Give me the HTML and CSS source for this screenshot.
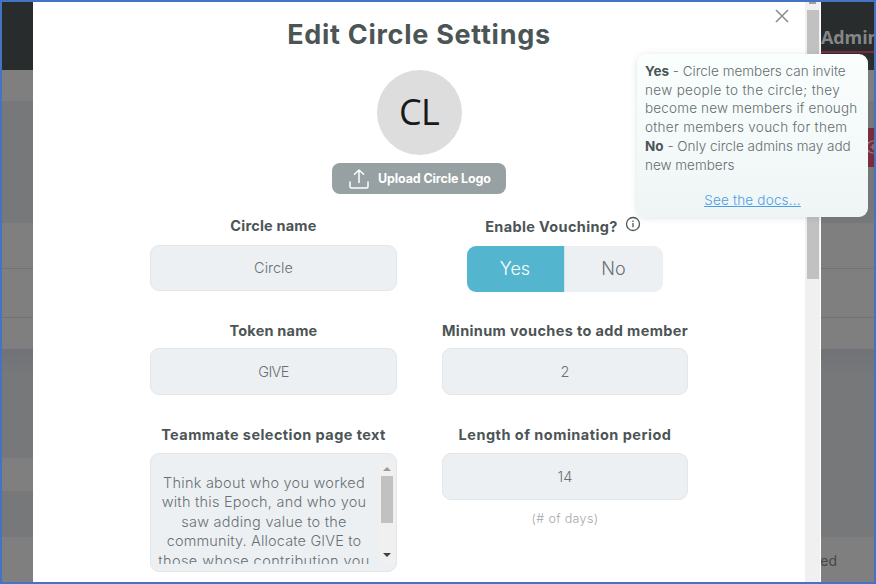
FILE: index.html
```
<!DOCTYPE html>
<html lang="en">
<head>
<meta charset="utf-8">
<title>Edit Circle Settings</title>
<link rel="stylesheet" href="styles.css">
</head>
<body>
<div class="frame">
  <div class="page">
    <header class="topbar"><span class="nav-item">Admin</span></header>
    <div class="band-light subnav"></div>
    <div class="band-mid hero">
      <div class="hero-button"><svg width="14" height="14" viewBox="0 0 14 14" fill="none" stroke="#8c8587" stroke-width="1.2"><circle cx="7" cy="7" r="6"/><path d="M7 4v6M4 7h6"/></svg></div>
    </div>
    <div class="table"><div class="row row-a"></div><div class="row row-b"></div><div class="row row-c"></div></div>
    <div class="band-mid shade"></div>
    <div class="section-tab"></div>
    <div class="band-mid gap"></div>
    <footer class="band-light foot"><span>ed</span></footer>
  </div>

  <div class="modal">
    <main class="content">
      <h1><span class="t-title">Edit Circle Settings</span></h1>
      <div class="avatar"><span class="t-avatar">CL</span></div>
      <button class="upload">
        <svg width="20" height="20" viewBox="0 0 20 20" fill="none" stroke="#fff" stroke-width="1.5" stroke-linecap="round" stroke-linejoin="round"><path d="M1 13v4.500a1.500 1.500 0 0 0 1.500 1.500h15a1.500 1.500 0 0 0 1.500-1.500V13M10 13.500V1.200M5.500 5.200 10 1l4.500 4.200"/></svg>
        <span class="t-upload">Upload Circle Logo</span>
      </button>
      <div class="form">
        <div class="col">
          <div class="field first"><label class="t-circle">Circle name</label><div class="input"><span class="v-circle">Circle</span></div></div>
          <div class="field"><label class="t-token">Token name</label><div class="input"><span class="v-give">GIVE</span></div></div>
          <div class="field last"><label class="t-team">Teammate selection page text</label>
            <div class="input area">
              <div class="area-text"><span class="a1">Think about who you worked</span><span class="a2">with this Epoch, and who you</span><span class="a3">saw adding value to the</span><span class="a4">community. Allocate GIVE to</span><span class="a5">those whose contribution you</span></div>
              <div class="area-bar"><i class="up"></i><i class="thumb"></i><i class="down"></i></div>
            </div>
          </div>
        </div>
        <div class="col right">
          <div class="field first"><label class="vouch"><span class="t-vouch">Enable Vouching?</span><svg width="16" height="16" viewBox="0 0 16 16" fill="none" stroke="#4c5556" stroke-width="1.300"><circle cx="8" cy="8" r="6.500"/><path d="M8 7v4.200M8 4.400v1.500"/></svg></label>
            <div class="toggle"><div class="on"><span class="t-yes">Yes</span></div><div class="off"><span class="t-no">No</span></div></div></div>
          <div class="field"><label class="t-min">Mininum vouches to add member</label><div class="input"><span>2</span></div></div>
          <div class="field last"><label class="t-length">Length of nomination period</label><div class="input"><span>14</span></div><div class="hint"><span class="t-days">(# of days)</span></div></div>
        </div>
      </div>
    </main>
    <div class="scroll"><i class="scroll-up"></i><i class="scroll-thumb"></i></div>
    <svg class="close" width="16" height="16" viewBox="0 0 16 16" stroke="#8a9395" stroke-width="1.700"><path d="M2 2l12 12M14 2 2 14"/></svg>
  </div>

  <aside class="tooltip">
    <p><span class="p1"><b>Yes</b> - Circle members can invite</span><span class="p2">new people to the circle; they</span><span class="p3">become new members if enough</span><span class="p4">other members vouch for them</span><span class="p5"><b>No</b> - Only circle admins may add</span><span class="p6">new members</span></p>
    <a class="t-docs">See the docs...</a>
  </aside>
</div>
</body>
</html>
```
FILE: styles.css
```
* { box-sizing: border-box; }
body { margin: 0; font-family: Inter, "Liberation Sans", sans-serif; color: #4c5556; }
.frame { position: relative; width: 876px; height: 584px; border: 2px solid #4472c4; overflow: hidden; background: #807f7f; }
.frame::after { content: ""; position: absolute; inset: -2px; border: 1px solid #6e94d4; border-bottom: 0; border-right: 0; pointer-events: none; }
.page { display: flex; flex-direction: column; height: 580px; }
.topbar { height: 68px; background: #282c2d; display: flex; justify-content: flex-end; }
.nav-item { width: 53px; height: 51px; padding-top: 23px; border-bottom: 2px solid #7c2938; color: #858687; font: 700 18px/24px "Open Sans", sans-serif; letter-spacing: -.1px; overflow: hidden; white-space: nowrap; }
.band-light { background: #807f7f; }
.band-mid { background: #77787a; }
.subnav { height: 31px; }
.hero { height: 122px; display: flex; justify-content: flex-end; padding-top: 27px; }
.hero-button { width: 20px; height: 39px; background: #7c2939; padding: 12px 0 0 12px; }
.hero-button svg { display: block; }
.table { height: 126px; background: #807f7f; }
.row { border-bottom: 1px solid #727272; }
.row-a { height: 46px; }
.row-b { height: 49px; }
.row-c { height: 31px; border: 0; }
.shade { height: 109px; background: linear-gradient(#707277, #77787a 26px); }
.section-tab { height: 33px; background: linear-gradient(90deg, #807f7f 50%, #77787a 50%); }
.gap { height: 46px; }
.foot { height: 45px; display: flex; justify-content: flex-end; padding: 14px 37px 0 0; font-size: 14px; line-height: 20px; color: #454849; }
.modal { position: absolute; left: 31px; top: 0; width: 788px; height: 580px; background: #fff; display: flex; }
.content { width: 772px; height: 580px; overflow: hidden; display: flex; flex-direction: column; align-items: center; }
h1 { margin: 15px 0 0; height: 34px; font-size: 27px; line-height: 35px; font-weight: 650; }
.avatar { margin-top: 19px; width: 85px; height: 85px; border-radius: 50%; background: #ddd; color: #17191a; display: flex; align-items: center; justify-content: center; font: 400 36px/83px "Open Sans", sans-serif; letter-spacing: -.7px; flex: none; }
.t-avatar { margin-top: -2px; }
.upload { margin: 8px 0 0; width: 174px; height: 31px; flex: none; border: 0; border-radius: 8px; background: #97a0a2; color: #fff; display: flex; align-items: center; padding: 0 0 0 17px; gap: 9px; font: 700 12.500px/31px Inter, sans-serif; white-space: nowrap; }
.form { display: flex; gap: 45px; margin-top: 21px; }
.col { width: 247px; }
.right { width: 246px; }
.field { height: 104px; display: flex; flex-direction: column; align-items: center; }
.field.first { height: 105px; }
label { height: 21px; margin-bottom: 7px; font-size: 14.500px; line-height: 22px; font-weight: 650; white-space: nowrap; }
.first label { height: 23px; }
.field.last label { height: 22px; }
.input { width: 100%; height: 47px; flex: none; border: 1px solid #e4e7e9; border-radius: 9px; background: #edf0f3; display: flex; align-items: center; justify-content: center; font-size: 14.500px; font-weight: 300; color: #697173; }
.first .input { height: 46px; padding-bottom: 1px; }
.vouch { display: flex; gap: 7px; margin-top: 1px; padding-right: 4px; }
.vouch.vouch { height: 23px; }
.toggle { display: flex; width: 196px; height: 46px; margin-right: 1px; border-radius: 9px; overflow: hidden; font-size: 18px; font-weight: 300; flex: none; }
.toggle div { width: 98px; padding-bottom: 1px; display: flex; align-items: center; justify-content: center; }
.on { background: #53b6ce; color: #fff; border-right: 1px solid #d0e6ed; }
.off { background: #edf0f3; color: #697173; }
.hint { margin-top: 8px; font-size: 12.500px; line-height: 22px; font-weight: 300; color: #a4a9aa; }
.area { height: 119px; align-items: flex-start; justify-content: flex-start; }
.area-text { width: 226px; height: 103px; margin-top: 7px; padding: 12px 0 0; display: flex; flex-direction: column; align-items: center; overflow: hidden; }
.area-text span { line-height: 19.400px; flex: none; white-space: nowrap; }
.area-bar { width: 16px; height: 103px; margin: 7px 0 0 2px; background: #f0f0f0; display: flex; flex-direction: column; align-items: center; }
.up { margin-top: 6px; border: 4px solid transparent; border-top: 0; border-bottom-color: #9b9b9b; }
.thumb { margin-top: 5px; width: 12px; height: 47px; background: #c1c1c1; }
.down { margin-top: 30px; border: 4px solid transparent; border-bottom: 0; border-top-color: #404040; }
.scroll { width: 16px; height: 580px; background: #f0f0f0; border-right: 1px solid #fff; display: flex; flex-direction: column; align-items: center; }
.scroll-up { width: 7px; height: 2px; background: #a0a0a0; }
.scroll-thumb { width: 12px; height: 269px; margin-top: 6px; background: #c1c1c1; }
.close { position: absolute; left: 741px; top: 6px; }
.tooltip { position: absolute; left: 635px; top: 52px; width: 231px; height: 163px; padding: 8px 8px 0; border-radius: 9px; background: linear-gradient(#fafffe, #eff5f5); box-shadow: 0 1px 7px rgba(90, 120, 120, .2); display: flex; flex-direction: column; align-items: center; font-size: 13.500px; color: #656d6f; }
.tooltip p { margin: 0; width: 100%; display: flex; flex-direction: column; align-items: flex-start; font-weight: 300; }
.tooltip p span { line-height: 18.700px; white-space: nowrap; }
.tooltip b { font-weight: 700; color: #4c5556; }
.t-docs { margin-top: 16px; line-height: 20px; color: #4a9ee8; text-decoration: underline; font-weight: 350; }

.t-title { letter-spacing: .72px; }
.t-upload { letter-spacing: -.13px; }
.t-circle, .t-token { letter-spacing: .2px; }
.t-team { letter-spacing: .43px; }
.t-vouch { letter-spacing: .35px; }
.t-min { letter-spacing: .36px; }
.t-length { letter-spacing: .48px; }
.t-days { letter-spacing: .35px; }
.t-docs { letter-spacing: .2px; }
.v-give { letter-spacing: -.6px; }
.a1, .a2, .a3 { letter-spacing: .24px; }
.a4 { letter-spacing: .15px; }
.a5 { letter-spacing: .42px; }
.p2 { letter-spacing: .33px; }
.p3 { letter-spacing: .17px; }
.p4 { letter-spacing: .28px; }
```
